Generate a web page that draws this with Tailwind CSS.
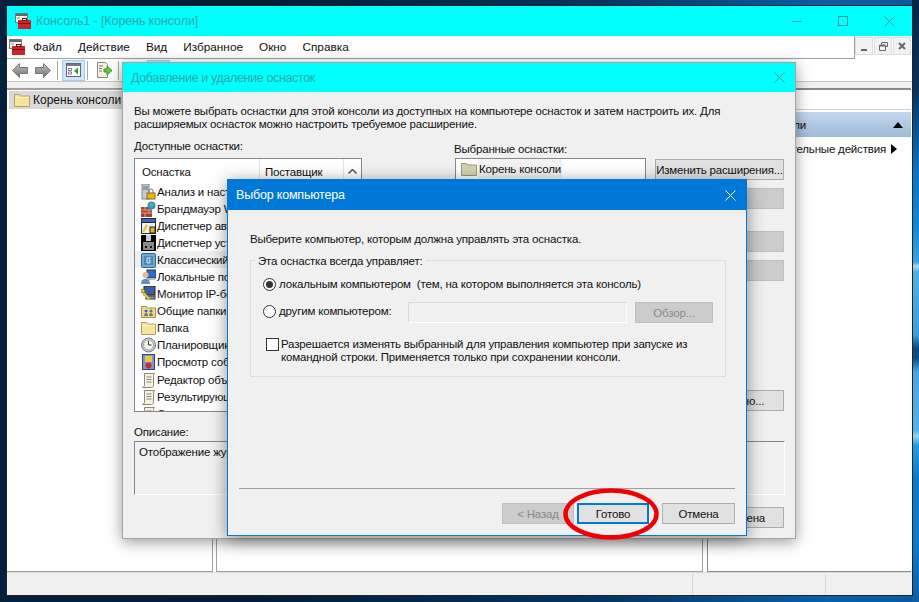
<!DOCTYPE html>
<html lang="ru">
<head>
    <meta charset="UTF-8">
    <script src="https://cdn.jsdelivr.net/npm/@tailwindcss/browser@4"></script>
    <title>Консоль1</title>
</head>
<body class="relative w-[919px] h-[602px] overflow-hidden bg-[linear-gradient(90deg,#04203c_0%,#031c36_28%,#05345f_65%,#0a5fa8_90%,#0a5a9c_100%)] font-['Liberation_Sans',sans-serif] text-[11.5px] tracking-[-0.18px] leading-[14px] text-[#111]">

    <!-- Desktop wallpaper, right edge -->
    <div class="absolute right-0 top-0 w-[7px] h-[602px] bg-[linear-gradient(180deg,#042448_0px,#05335f_90px,#0a72c4_170px,#0a8ad8_225px,#3aa5e2_262px,#a8d8f0_266px,#4fb0e6_272px,#3a9fdc_335px,#0a4c84_348px,#0a4c84_358px,#45a8e2_372px,#55b0e6_430px,#9ad2ee_436px,#20a0e0_445px,#0a78cc_480px,#0a7cd0_540px,#0a5fa8_602px)]"></div>

    <!-- Main console window -->
    <div class="absolute left-[6px] top-[5px] w-[907px] h-[591px] bg-white border border-[#222] flex flex-col">
        <div class="h-[30px] bg-[#00ffff] flex items-center pl-[8px] shrink-0">
            <svg width="16" height="16" viewBox="0 0 16 16"><rect x=".5" y=".5" width="12" height="9" fill="#f2f2f2" stroke="#777"/><rect x="1" y="1" width="11" height="2" fill="#666"/><path d="M2 5h3" stroke="#888"/><rect x="3" y="7" width="13" height="9" fill="#c9252b"/><rect x="3" y="10" width="13" height="1" fill="#7a1215"/><rect x="7.500" y="5.500" width="4" height="2" fill="none" stroke="#7a1215"/></svg>
            <span class="ml-[5px] text-[#30a8a8] text-[12.5px] tracking-[-0.1px]">Консоль1 - [Корень консоли]</span>
            <div class="ml-auto flex items-center h-full">
                <div class="w-[46px] flex justify-center"><div class="w-[10px] h-px bg-[#2a9a9a]"></div></div>
                <div class="w-[46px] flex justify-center"><div class="w-[10px] h-[10px] border border-[#2a9a9a]"></div></div>
                <div class="w-[46px] flex justify-center"><svg width="11" height="11" viewBox="0 0 11 11"><path d="M.5.5l10 10M10.500.5l-10 10" stroke="#2a9a9a" fill="none"/></svg></div>
            </div>
        </div>
        <div class="h-[23px] flex items-center shrink-0 border-b border-[#a0a0a0] mr-[57px] border-r">
            <svg class="ml-[2px]" width="16" height="16" viewBox="0 0 16 16"><rect x=".5" y=".5" width="12" height="9" fill="#f2f2f2" stroke="#777"/><rect x="1" y="1" width="11" height="2" fill="#666"/><path d="M2 5h3" stroke="#888"/><rect x="3" y="7" width="13" height="9" fill="#c9252b"/><rect x="3" y="10" width="13" height="1" fill="#7a1215"/><rect x="7.500" y="5.500" width="4" height="2" fill="none" stroke="#7a1215"/></svg>
            <div class="flex ml-[8px] gap-[16px] text-[11.8px] tracking-normal"><span>Файл</span><span>Действие</span><span>Вид</span><span>Избранное</span><span>Окно</span><span>Справка</span></div>
        </div>
        <div class="h-[23px] flex items-center shrink-0 bg-white border-b border-[#c8c8c8] pl-[5px]">
            <svg width="16" height="15" viewBox="0 0 16 15"><defs><linearGradient id="ar" x1="0" y1="0" x2="0" y2="1"><stop offset="0" stop-color="#c4c4c4"/><stop offset="1" stop-color="#6f6f6f"/></linearGradient></defs><path d="M.5 7.500L7.500.5v4h8v6h-8v4z" fill="url(#ar)" stroke="#777"/></svg>
            <svg class="ml-[7px]" width="16" height="15" viewBox="0 0 16 15"><path d="M15.500 7.500L8.500.5v4h-8v6h8v4z" fill="url(#ar)" stroke="#777"/></svg>
            <div class="ml-[6px] w-px h-[19px] bg-[#aaa]"></div>
            <div class="ml-[4px] w-[23px] h-[21px] bg-[#cfe5fb] border border-[#9fcdf5] flex items-center justify-center"><svg width="15" height="14" viewBox="0 0 15 14"><rect x=".5" y=".5" width="14" height="13" fill="#fff" stroke="#667"/><rect x="1" y="1" width="13" height="2" fill="#778"/><rect x="2.500" y="5.500" width="3" height="2" fill="#fff" stroke="#889"/><rect x="2.500" y="9" width="3" height="2" fill="#fff" stroke="#889"/><path d="M12 4.500v7L8 8z" fill="#2a2"/></svg></div>
            <div class="ml-[2px] w-px h-[19px] bg-[#aaa]"></div>
            <svg class="ml-[8px]" width="16" height="16" viewBox="0 0 16 16"><path d="M1.500.5h8l2 2v13h-10z" fill="#f8f4dc" stroke="#888"/><path d="M3 4h4M3 6.500h3M3 9h3" stroke="#777"/><path d="M8 7h3V4l5 4.500-5 4.500v-3H8z" fill="#6c4" stroke="#393"/></svg>
            <div class="ml-[6px] w-px h-[19px] bg-[#aaa]"></div>
            <div class="ml-[28px] w-[23px] h-[21px] bg-[#cfe5fb] border border-[#9fcdf5]"></div>
        </div>
        <div class="h-[6px] bg-[#f0f0f0] shrink-0"></div>
        <div class="flex-1 flex min-h-0 bg-white">
            <div class="w-[206px] border-t-2 border-r border-b border-[#a0a0a0]">
                <div class="mt-[1px] h-[18px] bg-[#d9d9d9] flex items-center pl-[5px] ml-[2px]">
                    <svg width="16" height="14" viewBox="0 0 16 14"><path d="M.5 13.500V1.500h5l1 1.500h9v10.500z" fill="#f8e39c" stroke="#b9a060"/><path d="M1 4.500h14" stroke="#fdf3c8"/></svg>
                    <span class="ml-[3px] text-[12px] tracking-normal">Корень консоли</span>
                </div>
            </div>
            <div class="w-[3px]"></div>
            <div class="w-[487px] border-t-2 border-x border-b border-[#a0a0a0]"></div>
            <div class="w-[4px]"></div>
            <div class="flex-1 border-t-2 border-l border-b border-[#8a8a8a] mr-px">
                <div class="h-[20px] border-b border-[#d0d0d0]"></div>
                <div class="mt-[2px] h-[25px] bg-gradient-to-b from-[#c4d8ec] to-[#9ebad8] flex items-center justify-between pr-[8px] pl-[4px]"><span class="w-[94px] text-right">Корень консоли</span><svg width="10" height="6" viewBox="0 0 10 6"><path d="M0 6l5-6 5 6z" fill="#000"/></svg></div>
                <div class="flex items-center justify-end h-[24px] pr-[14px]"><span>Дополнительные действия</span><svg class="ml-[5px]" width="6" height="10" viewBox="0 0 6 10"><path d="M0 0l6 5-6 5z" fill="#000"/></svg></div>
            </div>
        </div>
        <div class="h-[23px] bg-[#f0f0f0] shrink-0 flex border-t border-[#ddd]"><div class="w-[686px] border-r border-[#d9d9d9]"></div><div class="w-[133px] border-r border-[#d9d9d9]"></div></div>
        <!-- MDI buttons -->
        <div class="absolute right-[1px] top-[31px] flex gap-[1px]">
            <div class="w-[18px] h-[18px] bg-[#f2f2f2] border border-[#ddd] flex items-end justify-center pb-[3px]"><div class="w-[6px] h-[2px] bg-[#667]"></div></div>
            <div class="w-[18px] h-[18px] bg-[#f2f2f2] border border-[#ddd] flex items-center justify-center"><svg width="9" height="9" viewBox="0 0 9 9"><path d="M2.500 2.500V.5h6v4h-2M.5 3.500h6v5h-6z" fill="none" stroke="#667"/><path d="M.5 3.500h6" stroke="#667" stroke-width="2"/></svg></div>
            <div class="w-[18px] h-[18px] bg-[#f2f2f2] border border-[#ddd] flex items-center justify-center"><svg width="8" height="8" viewBox="0 0 8 8"><path d="M1 1l6 6M7 1L1 7" stroke="#667" stroke-width="2"/></svg></div>
        </div>
    </div>

    <!-- Add/remove snap-ins dialog -->
    <div class="absolute left-[122px] top-[62px] w-[674px] h-[477px] bg-[#f0f0f0] border border-[#a5a5a5] shadow-[0_3px_14px_rgba(0,0,0,0.4)]">
        <div class="h-[29px] bg-[#00ffff] flex items-center justify-between pl-[8px] pr-[10px]">
            <span class="text-[#30a8a8] text-[12.5px] tracking-[-0.36px]">Добавление и удаление оснасток</span>
            <svg width="11" height="11" viewBox="0 0 11 11"><path d="M.5.5l10 10M10.500.5l-10 10" stroke="#2a9a9a" fill="none"/></svg>
        </div>
        <div class="absolute left-[11px] top-[42px] w-[600px] leading-[13px]">Вы можете выбрать оснастки для этой консоли из доступных на компьютере оснасток и затем настроить их. Для расширяемых оснасток можно настроить требуемое расширение.</div>
        <div class="absolute left-[11px] top-[76px]">Доступные оснастки:</div>
        <div class="absolute left-[11px] top-[95px] w-[228px] h-[254px] bg-white border border-[#828790] overflow-hidden">
            <div class="flex h-[24px] items-center"><span class="w-[125px] pl-[7px] pt-[1px] border-r border-[#e5e5e5] h-full flex items-center">Оснастка</span><span class="pl-[5px] pt-[1px] w-[84px] border-r border-[#e5e5e5] h-full flex items-center">Поставщик</span><div class="flex-1 flex justify-center items-center"><svg width="9" height="5" viewBox="0 0 9 5"><path d="M.5 4.500l4-4 4 4" fill="none" stroke="#555" stroke-width="1.500"/></svg></div></div>
            <div class="absolute right-0 top-[20px] w-[17px] h-[60px] bg-[#cdcdcd]"></div>
            <div class="flex flex-col w-[210px] whitespace-nowrap">
                <div class="h-[17.100px] pl-[6px] flex items-center gap-[1px]"><svg width="15" height="16" viewBox="0 0 15 16"><rect x="1" y="0" width="7" height="15" fill="#c3ccd4" stroke="#7d8a96"/><path d="M2 3h5M2 5h5" stroke="#667"/><rect x="6" y="9" width="8" height="6" fill="#e8b520" stroke="#8a6a10"/><path d="M8 9V7a2 2 0 0 1 4 0v2" fill="none" stroke="#777"/></svg>Анализ и настройка безопасности</div>
                <div class="h-[17.100px] pl-[6px] flex items-center gap-[1px]"><svg width="15" height="16" viewBox="0 0 15 16"><rect x="0" y="6" width="11" height="10" fill="#a5402a"/><path d="M0 9h11M0 12h11M4 6v3M8 9v3M4 12v4" stroke="#dba58f"/><circle cx="10.500" cy="4.500" r="4" fill="#3a8fdc"/><path d="M8 3l3-1 2 2-3 2z" fill="#5bc24a"/></svg>Брандмауэр Windows</div>
                <div class="h-[17.100px] pl-[6px] flex items-center gap-[1px]"><svg width="15" height="16" viewBox="0 0 15 16"><rect x="0" y="0" width="15" height="16" fill="#20283c"/><rect x="1" y="1" width="13" height="3" fill="#3c64c0"/><rect x="1" y="5" width="13" height="10" fill="#f0f0f0"/><path d="M2 14l4-7" stroke="#e8c020" stroke-width="2"/><rect x="9" y="9" width="5" height="6" fill="#e8b520" stroke="#222"/></svg>Диспетчер авторизации</div>
                <div class="h-[17.100px] pl-[6px] flex items-center gap-[1px]"><svg width="15" height="16" viewBox="0 0 15 16"><rect width="15" height="16" fill="#000"/><rect x="5" y="0" width="5" height="6" fill="#ccc"/><rect x="2" y="7" width="11" height="8" fill="#8a8a8a"/><rect x="4" y="11" width="2" height="2" fill="#111"/><rect x="9" y="11" width="2" height="2" fill="#111"/></svg>Диспетчер устройств</div>
                <div class="h-[17.100px] pl-[6px] flex items-center gap-[1px] bg-[#f0f0f0]"><svg width="15" height="16" viewBox="0 0 15 16"><rect x=".5" y="1.500" width="14" height="14" rx="1" fill="#6fa9d6" stroke="#34638c"/><rect x="3" y="4" width="9" height="9" fill="#4c86bb"/><path d="M10 6H6v5h3V8H7.500" fill="none" stroke="#dbe9f4"/></svg>Классический проводник</div>
                <div class="h-[17.100px] pl-[6px] flex items-center gap-[1px]"><svg width="15" height="16" viewBox="0 0 15 16"><rect x="6" y="1" width="9" height="8" fill="#2a6fd0" stroke="#234"/><rect x="7" y="9" width="7" height="2" fill="#bbb"/><circle cx="4.500" cy="6" r="3" fill="#e8b890"/><path d="M0 15c0-4 2-5 4.500-5S9 11 9 15z" fill="#5b8fc9"/></svg>Локальные пользователи и группы</div>
                <div class="h-[17.100px] pl-[6px] flex items-center gap-[1px]"><svg width="15" height="16" viewBox="0 0 15 16"><rect x="3" y="0" width="11" height="9" fill="#3c5fa8" stroke="#222"/><rect x="5" y="10" width="9" height="3" fill="#999" stroke="#333"/><path d="M1 5l7 8" stroke="#e8d020" stroke-width="2"/><circle cx="2" cy="5" r="2" fill="#e8d020" stroke="#333" stroke-width=".5"/></svg>Монитор IP-безопасности</div>
                <div class="h-[17.100px] pl-[6px] flex items-center gap-[1px]"><svg width="15" height="16" viewBox="0 0 15 16"><path d="M.5 14.500V3.500h5l1 1.500h8v9.500z" fill="#ecd98c" stroke="#a88f50"/><circle cx="5" cy="8" r="1.500" fill="#2a6fd0"/><circle cx="10" cy="8" r="1.500" fill="#2a9a4a"/><path d="M3 13c0-2 1-3 2-3s2 1 2 3zM8 13c0-2 1-3 2-3s2 1 2 3z" fill="#777"/></svg>Общие папки</div>
                <div class="h-[17.100px] pl-[6px] flex items-center gap-[1px]"><svg width="15" height="16" viewBox="0 0 15 16"><path d="M.5 14.500V2.500h5l1 1.500h8v10.500z" fill="#f8e39c" stroke="#b9a060"/><path d="M1 5.500h13" stroke="#fdf3c8"/></svg>Папка</div>
                <div class="h-[17.100px] pl-[6px] flex items-center gap-[1px]"><svg width="15" height="16" viewBox="0 0 15 16"><circle cx="7.500" cy="8" r="7" fill="#c9ced6" stroke="#6f7680"/><circle cx="7.500" cy="8" r="5" fill="#f4f4e8" stroke="#9aa"/><path d="M7.500 4v4h3" fill="none" stroke="#333"/></svg>Планировщик заданий</div>
                <div class="h-[17.100px] pl-[6px] flex items-center gap-[1px]"><svg width="15" height="16" viewBox="0 0 15 16"><rect x="1.500" y=".5" width="12" height="15" fill="#7f95d0" stroke="#33437a"/><rect x="4" y="2" width="7" height="6" fill="#e8c84a"/><circle cx="7.500" cy="11.500" r="3" fill="#d02a2a"/></svg>Просмотр событий</div>
                <div class="h-[17.100px] pl-[6px] flex items-center gap-[1px]"><svg width="15" height="16" viewBox="0 0 15 16"><path d="M3.500 1.500h10c-1 1-1 2-1 3v9c0 1-1 2-2 2h-9c1-.5 2-1 2-2z" fill="#f6f1da" stroke="#888"/><path d="M5.500 5h5M5.500 7.500h5M5.500 10h5" stroke="#888"/></svg>Редактор объектов групповой</div>
                <div class="h-[17.100px] pl-[6px] flex items-center gap-[1px]"><svg width="15" height="16" viewBox="0 0 15 16"><path d="M3.500 1.500h10c-1 1-1 2-1 3v9c0 1-1 2-2 2h-9c1-.5 2-1 2-2z" fill="#f6f1da" stroke="#888"/><path d="M5.500 5h5M5.500 7.500h5M5.500 10h5" stroke="#888"/></svg>Результирующая политика</div>
                <div class="h-[17.100px] pl-[6px] flex items-center gap-[1px]"><svg width="15" height="16" viewBox="0 0 15 16"><path d="M3.500 1.500h10c-1 1-1 2-1 3v9c0 1-1 2-2 2h-9c1-.5 2-1 2-2z" fill="#f6f1da" stroke="#888"/><path d="M5.500 5h5M5.500 7.500h5M5.500 10h5" stroke="#888"/></svg>Сведения</div>
            </div>
        </div>
        <div class="absolute left-[331px] top-[79px]">Выбранные оснастки:</div>
        <div class="absolute left-[332px] top-[95px] w-[191px] h-[40px] bg-white border border-[#828790]"><div class="flex items-center h-[19px] pl-[5px]"><svg width="16" height="14" viewBox="0 0 16 14"><path d="M.5 13.500V1.500h5l1 1.500h9v10.500z" fill="#d3d3ae" stroke="#99997a"/></svg><span class="bg-[#f2f2f2] h-full flex items-center px-[1px] ml-[1px]">Корень консоли</span></div></div>
        <div class="absolute left-[532px] top-[96px] w-[129px] h-[21px] bg-[#e1e1e1] border border-[#adadad] flex items-center justify-center whitespace-nowrap">Изменить расширения...</div>
        <div class="absolute left-[532px] top-[125px] w-[129px] h-[21px] bg-[#cccccc] border border-[#bfbfbf]"></div>
        <div class="absolute left-[532px] top-[168px] w-[129px] h-[21px] bg-[#cccccc] border border-[#bfbfbf]"></div>
        <div class="absolute left-[532px] top-[197px] w-[129px] h-[21px] bg-[#cccccc] border border-[#bfbfbf]"></div>
        <div class="absolute left-[532px] top-[327px] w-[129px] h-[21px] bg-[#e1e1e1] border border-[#adadad] flex items-center justify-center whitespace-nowrap">Дополнительно...</div>
        <div class="absolute left-[11px] top-[362px]">Описание:</div>
        <div class="absolute left-[11px] top-[378px] w-[651px] h-[54px] border border-[#828790] border-b-[#fff] border-r-[#fff] pl-[4px] pt-[3px]">Отображение журналов событий</div>
        <div class="absolute left-[583px] top-[444px] w-[78px] h-[21px] bg-[#e1e1e1] border border-[#adadad] flex items-center justify-center">Отмена</div>
    </div>

    <!-- Computer selection dialog -->
    <div class="absolute left-[227px] top-[179px] w-[520px] h-[357px] bg-[#f0f0f0] border border-[#0078d7] shadow-[0_3px_16px_rgba(0,0,0,0.45)]">
        <div class="h-[30px] bg-[#0078d7] flex items-center justify-between pl-[8px] pr-[10px] text-white">
            <span class="text-[12.5px] tracking-[-0.19px]">Выбор компьютера</span>
            <svg width="11" height="11" viewBox="0 0 11 11"><path d="M.5.5l10 10M10.500.5l-10 10" stroke="#fff" fill="none"/></svg>
        </div>
        <div class="absolute left-[22px] top-[52px]">Выберите компьютер, которым должна управлять эта оснастка.</div>
        <div class="absolute left-[22px] top-[80px] w-[476px] h-[117px] border border-[#dcdcdc]">
            <span class="absolute left-[4px] -top-[7px] bg-[#f0f0f0] px-[3px]">Эта оснастка всегда управляет:</span>
            <div class="absolute left-[12px] top-[16px] flex items-center gap-[3px]"><div class="w-[13px] h-[13px] rounded-full border border-[#333] bg-white flex items-center justify-center"><div class="w-[7px] h-[7px] rounded-full bg-[#333]"></div></div><span>локальным компьютером&nbsp; (тем, на котором выполняется эта консоль)</span></div>
            <div class="absolute left-[12px] top-[43px] flex items-center gap-[3px]"><div class="w-[13px] h-[13px] rounded-full border border-[#333] bg-white"></div><span>другим компьютером:</span></div>
            <div class="absolute left-[157px] top-[41px] w-[219px] h-[21px] border border-[#d9d9d9] border-r-white border-b-white bg-[#f0f0f0]"></div>
            <div class="absolute left-[384px] top-[41px] w-[78px] h-[21px] bg-[#cccccc] border border-[#bfbfbf] text-[#8a8a8a] flex items-center justify-center">Обзор...</div>
            <div class="absolute left-[15px] top-[77px] flex gap-[2px]"><div class="w-[13px] h-[13px] border border-[#333] bg-white shrink-0"></div><div class="w-[420px] leading-[13px]">Разрешается изменять выбранный для управления компьютер при запуске из командной строки. Применяется только при сохранении консоли.</div></div>
        </div>
        <div class="absolute left-[11px] right-[11px] top-[308px] h-px bg-[#a0a0a0]"></div>
        <div class="absolute right-[11px] top-[323px] flex">
            <div class="w-[72px] h-[21px] bg-[#cccccc] border border-[#bfbfbf] text-[#8a8a8a] flex items-center justify-center">&lt; Назад</div>
            <div class="ml-[3px] w-[72px] h-[21px] bg-[#e1e1e1] border-2 border-[#0078d7] flex items-center justify-center">Готово</div>
            <div class="ml-[13px] w-[73px] h-[21px] bg-[#e1e1e1] border border-[#adadad] flex items-center justify-center">Отмена</div>
        </div>
    </div>

    <!-- Red annotation ellipse -->
    <svg class="absolute left-[562px] top-[487px]" width="98" height="54" viewBox="0 0 98 54"><ellipse cx="49" cy="27" rx="45.500" ry="23.500" fill="none" stroke="#f00000" stroke-width="4.500"/></svg>
</body>
</html>
